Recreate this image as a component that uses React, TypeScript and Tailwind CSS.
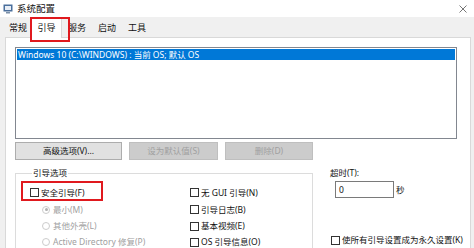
import React from "react";

function Check({ label, className = "" }: { label: string; className?: string }) {
  return (
    <div className={`flex items-center ${className}`}>
      <span className="w-[9px] h-[9px] border border-[#333333] bg-white shrink-0" />
      <span className="ml-[2px] whitespace-nowrap">{label}</span>
    </div>
  );
}

function Radio({ label, on = false, className = "" }: { label: string; on?: boolean; className?: string }) {
  return (
    <div className={`flex items-center text-[#a0a0a0] ${className}`}>
      <span className="w-[8px] h-[8px] rounded-full border border-[#cccccc] bg-white shrink-0 flex items-center justify-center">
        {on && <span className="w-[3px] h-[3px] rounded-full bg-[#b0b0b0]" />}
      </span>
      <span className="ml-[3px] whitespace-nowrap">{label}</span>
    </div>
  );
}

const TABS = [
  { t: "常规", w: "w-[26px]" },
  { t: "引导", w: "w-[31px]" },
  { t: "服务", w: "w-[30px]" },
  { t: "启动", w: "w-[30px]" },
  { t: "工具", w: "w-[30px]" },
];

export default function App() {
  return (
    <div className="relative w-[474px] h-[248px] overflow-hidden bg-[#f0f0f0] text-[8.5px] leading-[12px] text-[#111111] font-['Noto_Sans','Noto_Sans_CJK_SC',sans-serif] flex flex-col">
      {/* title bar */}
      <div className="h-[17px] bg-white flex items-center pl-[3px] pr-[7px] shrink-0">
        <svg width="10" height="10" viewBox="0 0 10 10">
          <rect x="0.5" y="0.5" width="9" height="7" fill="#4a6f9c" />
          <rect x="2" y="2" width="6" height="4" fill="#e8eef6" />
          <rect x="3" y="8" width="4" height="1.5" fill="#7b8fa8" />
        </svg>
        <span className="ml-[4px] text-[9.5px]">系统配置</span>
        <svg className="ml-auto" width="8" height="8" viewBox="0 0 8 8">
          <path d="M0.5 0.5L7.5 7.5M7.5 0.5L0.5 7.5" stroke="#666" strokeWidth="0.9" />
        </svg>
      </div>

      {/* tabs */}
      <div className="h-[20px] flex items-end pl-[5px] shrink-0 relative z-10 text-[9px]">
        {TABS.map(({ t, w }, i) =>
          i === 1 ? (
            <div
              key={t}
              className={`${w} h-[21px] -mb-px bg-white border border-b-0 border-[#d9d9d9] flex items-center justify-center shrink-0`}
            >
              {t}
            </div>
          ) : (
            <div key={t} className={`${w} h-[19px] flex items-center justify-center shrink-0`}>
              {t}
            </div>
          )
        )}
      </div>

      {/* panel */}
      <div className="ml-[5px] w-[466px] flex-1 bg-white border border-[#d9d9d9] pl-[9px] pt-[9px]">
        <div className="w-[442px] h-[92px] border border-[#828790] p-px">
          <div className="h-[11px] bg-[#0078d7] text-white leading-[11px] pl-px whitespace-nowrap">
            Windows 10 (C:\WINDOWS) : 当前 OS; 默认 OS
          </div>
        </div>

        <div className="flex gap-[7px] mt-[3px]">
          <div className="w-[107px] h-[18px] shrink-0 bg-[#e1e1e1] border border-[#adadad] flex items-center justify-center">
            高级选项(V)...
          </div>
          <div className="w-[89px] h-[18px] shrink-0 bg-[#cccccc] border border-[#bfbfbf] text-[#a0a0a0] flex items-center justify-center">
            设为默认值(S)
          </div>
          <div className="w-[88px] h-[18px] shrink-0 bg-[#cccccc] border border-[#bfbfbf] text-[#a0a0a0] flex items-center justify-center">
            删除(D)
          </div>
        </div>

        <div className="flex items-start">
          <fieldset className="w-[298px] h-[90px] shrink-0 mt-[7px] border border-[#dcdcdc] pl-[14px] pt-[5px]">
            <legend className="ml-[2px] px-[1px] leading-[12px]">引导选项</legend>
            <div className="grid grid-cols-[160px_1fr]">
              <div className="flex flex-col">
                <Check label="安全引导(F)" className="h-[17px]" />
                <Radio label="最小(M)" on className="h-[17px] ml-[12px]" />
                <Radio label="其他外壳(L)" className="h-[16px] ml-[12px]" />
                <Radio label="Active Directory 修复(P)" className="h-[16px] ml-[12px]" />
              </div>
              <div className="flex flex-col">
                <Check label="无 GUI 引导(N)" className="h-[17px]" />
                <Check label="引导日志(B)" className="h-[17px]" />
                <Check label="基本视频(E)" className="h-[16px]" />
                <Check label="OS 引导信息(O)" className="h-[16px]" />
              </div>
            </div>
          </fieldset>

          <div className="ml-[17px] mt-[7px] flex flex-col shrink-0">
            <div className="leading-[12px]">超时(T):</div>
            <div className="flex items-center mt-[2px] ml-[5px]">
              <div className="w-[59px] h-[17px] border border-[#7a7a7a] bg-white pl-[3px] leading-[15px]">0</div>
              <span className="ml-[2px]">秒</span>
            </div>
            <Check label="使所有引导设置成为永久设置(K)" className="mt-[36px] ml-px h-[12px]" />
          </div>
        </div>
      </div>

      {/* red highlight boxes */}
      <div className="absolute left-[30px] top-[17px] w-[40px] h-[25px] border-2 border-[#e0191e] pointer-events-none z-20" />
      <div className="absolute left-[21px] top-[181px] w-[82px] h-[20px] border-2 border-[#e0191e] pointer-events-none z-20" />
    </div>
  );
}
